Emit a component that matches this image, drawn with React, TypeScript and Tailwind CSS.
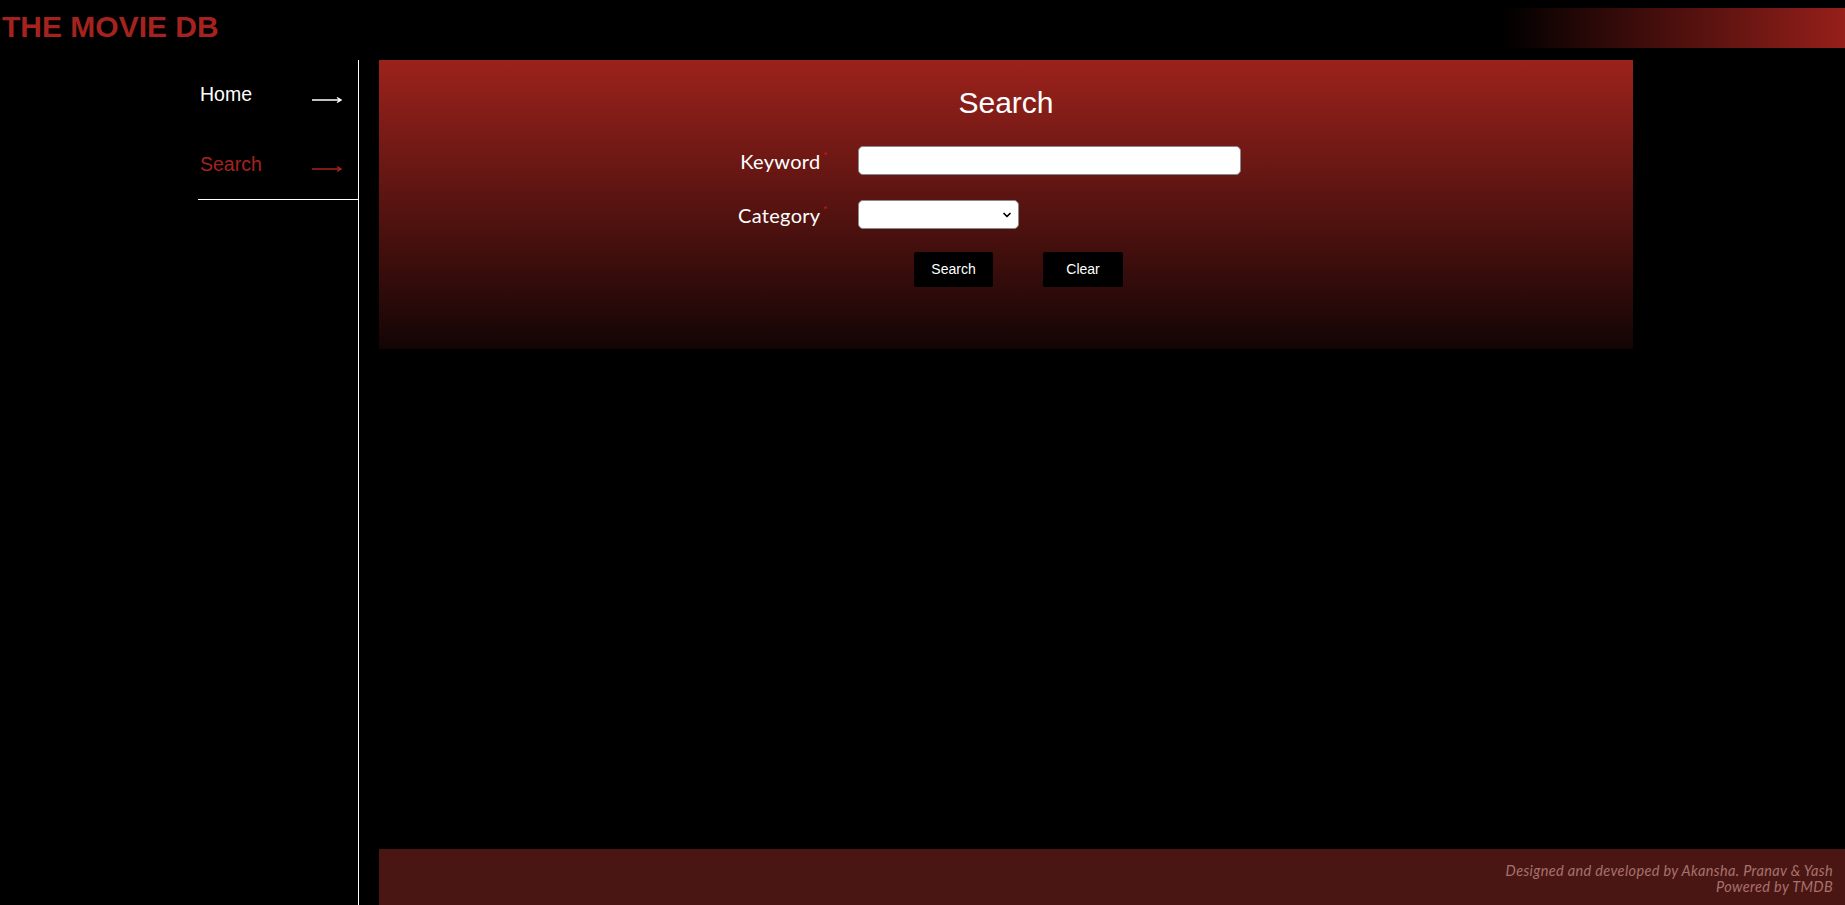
import { ChevronDown } from "lucide-react";

const Arrow = ({ className }: { className: string }) => (
  <svg width="30" height="10" viewBox="0 0 30 10" className={className} fill="none">
    <path d="M0 5H29M25 2.5L29 5L25 7.5" stroke="currentColor" strokeWidth="1.4" />
  </svg>
);

const Label = ({ text }: { text: string }) => (
  <div className="w-[450px] shrink-0 flex justify-end items-start">
    <span className="text-white text-[20px] leading-none tracking-[0.3px] font-['Lato','Liberation_Sans',sans-serif]">{text}</span>
    <span className="text-[#e01010] text-[9px] leading-none ml-[3px] mr-[2px] font-['Liberation_Sans',sans-serif]">*</span>
  </div>
);

const App = () => {
  return (
    <div className="min-h-screen flex flex-col bg-black font-['Liberation_Sans',Arial,sans-serif]">
      {/* header */}
      <header className="h-[60px] shrink-0 flex items-start justify-between">
        <h1 className="pl-[2px] pt-[9px] text-[30px] leading-[36px] font-bold text-[#a4231f]">THE MOVIE DB</h1>
        <div className="mt-[8px] h-[40px] w-[345px] bg-[linear-gradient(to_right,#000,#961f1a)]" />
      </header>

      <div className="flex-1 flex pl-[198px]">
        {/* sidebar */}
        <aside className="w-[161px] shrink-0 border-r border-white">
          <nav className="border-b border-white">
            <a className="h-[70px] flex items-center justify-between pl-[2px] pr-[16px]">
              <span className="text-white text-[19.5px] leading-[28px] -mt-[2px]">Home</span>
              <Arrow className="text-white mt-[9px]" />
            </a>
            <a className="h-[69px] flex items-center justify-between pl-[2px] pr-[16px]">
              <span className="text-[#a4231f] text-[19.5px] leading-[28px] -mt-[2px]">Search</span>
              <Arrow className="text-[#a4231f] mt-[9px]" />
            </a>
          </nav>
        </aside>

        {/* main */}
        <main className="flex-1 flex flex-col pl-[20px]">
          <section className="w-[1254px] h-[289px] bg-[linear-gradient(to_bottom,#9d221c,#130505)] pt-[27px]">
            <h2 className="text-center text-white text-[30px] leading-[32px]">Search</h2>
            <div className="mt-[27px] flex items-center h-[29px]">
              <Label text="Keyword" />
              <input className="ml-[29px] w-[383px] h-[29px] bg-white border border-[#8a8a8a] rounded-[5px] px-2 text-sm outline-none" />
            </div>
            <div className="mt-[25px] flex items-center h-[29px]">
              <Label text="Category" />
              <div className="relative ml-[29px]">
                <select className="appearance-none w-[161px] h-[29px] bg-white border border-[#8a8a8a] rounded-[5px] px-2 text-sm outline-none" />
                <ChevronDown className="absolute right-[6px] top-[9px] w-[12px] h-[12px] text-black" strokeWidth={3.5} />
              </div>
            </div>
            <div className="mt-[23px] flex pl-[535px] gap-[50px]">
              <button className="w-[79px] h-[35px] bg-black text-white text-[14px] rounded-[2px]">Search</button>
              <button className="w-[80px] h-[35px] bg-black text-white text-[14px] rounded-[2px]">Clear</button>
            </div>
          </section>

          <footer className="mt-auto h-[56px] bg-[#4a1614] pt-[14px] pr-[12px] text-right text-[#a8716c] italic text-[14.5px] leading-[16px] tracking-[0.35px] font-['Lato','Liberation_Sans',sans-serif]">
            <p>Designed and developed by Akansha. Pranav &amp; Yash</p>
            <p>Powered by TMDB</p>
          </footer>
        </main>
      </div>
    </div>
  );
};

export default App;
